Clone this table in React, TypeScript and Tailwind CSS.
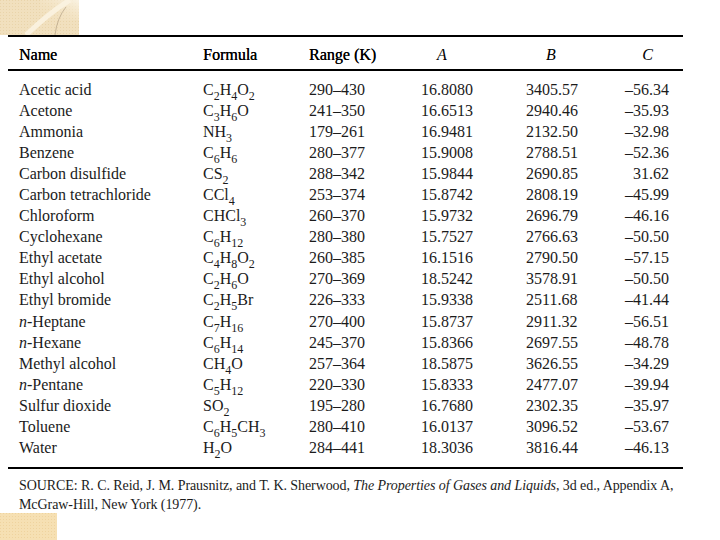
import React from "react";

const rows: string[][] = [
  ["Acetic acid", "C_2H_4O_2", "290–430", "16.8080", "3405.57", "–56.34"],
  ["Acetone", "C_3H_6O", "241–350", "16.6513", "2940.46", "–35.93"],
  ["Ammonia", "NH_3", "179–261", "16.9481", "2132.50", "–32.98"],
  ["Benzene", "C_6H_6", "280–377", "15.9008", "2788.51", "–52.36"],
  ["Carbon disulfide", "CS_2", "288–342", "15.9844", "2690.85", "31.62"],
  ["Carbon tetrachloride", "CCl_4", "253–374", "15.8742", "2808.19", "–45.99"],
  ["Chloroform", "CHCl_3", "260–370", "15.9732", "2696.79", "–46.16"],
  ["Cyclohexane", "C_6H_12", "280–380", "15.7527", "2766.63", "–50.50"],
  ["Ethyl acetate", "C_4H_8O_2", "260–385", "16.1516", "2790.50", "–57.15"],
  ["Ethyl alcohol", "C_2H_6O", "270–369", "18.5242", "3578.91", "–50.50"],
  ["Ethyl bromide", "C_2H_5Br", "226–333", "15.9338", "2511.68", "–41.44"],
  ["n-Heptane", "C_7H_16", "270–400", "15.8737", "2911.32", "–56.51"],
  ["n-Hexane", "C_6H_14", "245–370", "15.8366", "2697.55", "–48.78"],
  ["Methyl alcohol", "CH_4O", "257–364", "18.5875", "3626.55", "–34.29"],
  ["n-Pentane", "C_5H_12", "220–330", "15.8333", "2477.07", "–39.94"],
  ["Sulfur dioxide", "SO_2", "195–280", "16.7680", "2302.35", "–35.97"],
  ["Toluene", "C_6H_5CH_3", "280–410", "16.0137", "3096.52", "–53.67"],
  ["Water", "H_2O", "284–441", "18.3036", "3816.44", "–46.13"],
];

function Formula({ f }: { f: string }) {
  const parts = f.split(/(_\d+)/).filter((p) => p.length > 0);
  return (
    <span>
      {parts.map((p, i) =>
        p.startsWith("_") ? (
          <span key={i} className="relative top-[5px] text-[12px] leading-none">
            {p.slice(1)}
          </span>
        ) : (
          <span key={i}>{p}</span>
        )
      )}
    </span>
  );
}

function Name({ n }: { n: string }) {
  if (n.startsWith("n-")) {
    return (
      <span>
        <i>n</i>
        {n.slice(1)}
      </span>
    );
  }
  return <span>{n}</span>;
}

function TopDeco() {
  return (
    <svg width="79" height="35" viewBox="0 0 79 35" className="block">
      <defs>
        <pattern id="dots" width="3" height="3" patternUnits="userSpaceOnUse">
          <rect width="3" height="3" fill="#f1e0be" />
          <rect width="1" height="1" fill="#e9d4aa" />
        </pattern>
        <linearGradient id="glow" x1="1" y1="0" x2="0" y2="1">
          <stop offset="0" stopColor="#fbf5e8" stopOpacity="0.9" />
          <stop offset="0.5" stopColor="#f7ebd2" stopOpacity="0.3" />
          <stop offset="1" stopColor="#f1e0be" stopOpacity="0" />
        </linearGradient>
      </defs>
      <rect width="79" height="35" fill="url(#dots)" />
      <rect x="40" width="39" height="20" fill="url(#glow)" />
      <path d="M70 0 Q50 12 26 35" stroke="#fbf3e1" strokeWidth="5" fill="none" opacity="0.9" />
      <path d="M66 7 Q57 18 55 35" stroke="#a8957a" strokeWidth="0.6" fill="none" />
    </svg>
  );
}

function BottomDeco() {
  return (
    <svg width="57" height="27" viewBox="0 0 57 27" className="block">
      <defs>
        <pattern id="dots2" width="3" height="3" patternUnits="userSpaceOnUse">
          <rect width="3" height="3" fill="#f6e0b3" />
          <rect width="1" height="1" fill="#efd39e" />
        </pattern>
      </defs>
      <rect width="57" height="27" fill="url(#dots2)" />
    </svg>
  );
}

export default function App() {
  return (
    <div
      className="relative w-[720px] h-[540px] bg-white overflow-hidden text-[#1b1b1b]"
      style={{ fontFamily: '"Liberation Serif", "DejaVu Serif", serif' }}
    >
      <TopDeco />
      <div className="ml-[8px] w-[675px] border-t-2 border-black">
        <div className="flex h-[34px] items-center border-b-2 border-black pt-[3px] text-[16px] text-black">
          <div className="w-[195px] pl-[11px] [text-shadow:0.25px_0_0_#000]">Name</div>
          <div className="w-[106px] [text-shadow:0.25px_0_0_#000]">Formula</div>
          <div className="w-[112px] [text-shadow:0.25px_0_0_#000]">Range (K)</div>
          <div className="w-[105px] pl-[16px] italic">A</div>
          <div className="w-[80px] pl-[20px] italic">B</div>
          <div className="w-[63px] pr-[16px] text-right italic">C</div>
        </div>
        <div className="pt-[8px] pb-[8px] border-b-2 border-black text-[16px]">
          {rows.map((r, i) => (
            <div key={i} className="flex h-[21.1px] items-center leading-none">
              <div className="w-[195px] pl-[11px] whitespace-nowrap">
                <Name n={r[0]} />
              </div>
              <div className="w-[106px] whitespace-nowrap">
                <Formula f={r[1]} />
              </div>
              <div className="w-[112px]">{r[2]}</div>
              <div className="w-[105px]">{r[3]}</div>
              <div className="w-[80px]">{r[4]}</div>
              <div className="w-[63px] text-right">{r[5]}</div>
            </div>
          ))}
        </div>
      </div>
      <div className="ml-[19px] pt-[7px] text-[14px] leading-[19px] w-[680px] tracking-[-0.075px]">
        <div className="whitespace-nowrap">
          SOURCE: R. C. Reid, J. M. Prausnitz, and T. K. Sherwood,{" "}
          <i>The Properties of Gases and Liquids</i>, 3d ed., Appendix A,
        </div>
        <div>McGraw-Hill, New York (1977).</div>
      </div>
      <div className="absolute left-0 top-[513px]">
        <BottomDeco />
      </div>
    </div>
  );
}
